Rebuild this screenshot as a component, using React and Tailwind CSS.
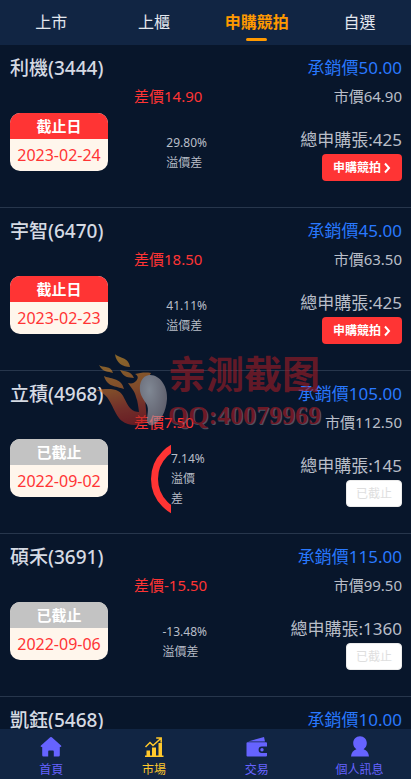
import React, { useState } from 'react';

const tabs = ['上市', '上櫃', '申購競拍', '自選'];

const stocks = [
  { name: '利機', code: '3444', offer: '50.00', market: '64.90', diff: '14.90', rate: '29.80%', total: 425, date: '2023-02-24', open: true },
  { name: '宇智', code: '6470', offer: '45.00', market: '63.50', diff: '18.50', rate: '41.11%', total: 425, date: '2023-02-23', open: true },
  { name: '立積', code: '4968', offer: '105.00', market: '112.50', diff: '7.50', rate: '7.14%', total: 145, date: '2022-09-02', open: false, gauge: true },
  { name: '碩禾', code: '3691', offer: '115.00', market: '99.50', diff: '-15.50', rate: '-13.48%', total: 1360, date: '2022-09-06', open: false },
];

// quoted, but no auction details yet
const upcoming = { name: '凱鈺', code: '5468', offer: '10.00' };

const HomeIcon = () => (
  <svg viewBox="0 0 22 22" className="size-[22px]" fill="currentColor" aria-hidden="true">
    <path d="M10.200 1.300a1.200 1.200 0 0 1 1.600 0l9.200 8.200c.7.7.3 1.500-.6 1.500h-.6v8.200a1.300 1.300 0 0 1-1.300 1.300h-4.700v-4.800c0-.7-.4-1.100-1.100-1.100h-3.400c-.7 0-1.100.4-1.100 1.100v4.800H3.500a1.300 1.300 0 0 1-1.300-1.300V11h-.6c-.9 0-1.300-.8-.6-1.500z" />
  </svg>
);

const MarketIcon = () => (
  <svg viewBox="0 0 22 22" className="size-[22px]" fill="currentColor" aria-hidden="true">
    <path d="M3.500 14.500H7V20H3.500zM9 11.500h4V20H9zM15.500 7H19v13h-3.500zM2 19.500h18.500V21H2z" />
    <path d="M2.500 11 7 6.500l3 3 7.500-6.700M13.200 2h5v4.800" fill="none" stroke="currentColor" strokeWidth="1.500" />
  </svg>
);

const WalletIcon = () => (
  <svg viewBox="0 0 22 22" className="size-[22px]" fill="currentColor" aria-hidden="true">
    <path d="M2 5.400 18 1l1 4.400z" />
    <path d="M2 6.200h18a1 1 0 0 1 1 1v3.300h-5.200a3.200 3.200 0 0 0 0 6.400H21v2.600a1 1 0 0 1-1 1H1.500a1 1 0 0 1-1-1V7.200a1 1 0 0 1 1-1z" />
    <circle cx="16" cy="13.700" r="1.700" />
  </svg>
);

const UserIcon = () => (
  <svg viewBox="0 0 22 22" className="size-[22px]" fill="currentColor" aria-hidden="true">
    <path d="M11 .2c4 0 6.800 2.900 6.800 6.900 0 2.700-1.300 4.900-3.200 6.200 3 1 5.200 3.500 5.400 7.200H2c.2-3.700 2.400-6.200 5.400-7.200-1.900-1.300-3.200-3.500-3.200-6.200C4.200 3.100 7 .2 11 .2z" />
  </svg>
);

const navItems = [
  { label: '首頁', Icon: HomeIcon },
  { label: '市場', Icon: MarketIcon },
  { label: '交易', Icon: WalletIcon },
  { label: '個人訊息', Icon: UserIcon },
];

const DeadlineBadge = ({ open, date }) => (
  <div className="w-[98px] overflow-hidden rounded-[10px] bg-[#fff6ec] text-center">
    <p className={`h-[26px] text-[15px] leading-[26px] font-bold text-white ${open ? 'bg-[#ff3434]' : 'bg-[#c3c3c3]'}`}>
      {open ? '截止日' : '已截止'}
    </p>
    <p className="h-8 text-base leading-8 text-[#ff3434]">{date}</p>
  </div>
);

const RowTitle = ({ stock }) => (
  <div className="flex items-center justify-between">
    <h2 className="text-[19px] leading-8 font-medium text-[#d5dae3]">
      {stock.name}({stock.code})
    </h2>
    <p className="text-[17px] leading-8 text-[#2979ff]">承銷價{stock.offer}</p>
  </div>
);

const StockRow = ({ stock }) => (
  <li className="h-[163px] shrink-0 border-b border-[#27364c] pt-[7px] pr-[9px] pl-[10px]">
    <RowTitle stock={stock} />
    <div className="flex">
      <div className="w-[124px] pt-[29px]">
        <DeadlineBadge open={stock.open} date={stock.date} />
      </div>
      <div className="whitespace-nowrap">
        <p className="text-[15px] leading-6 text-[#ff3434]">差價{stock.diff}</p>
        <div className="mt-2 ml-[17px] flex h-[74px] w-14 items-center justify-end text-xs leading-5 text-[#b9bec8]">
          {stock.gauge && (
            <svg viewBox="0 0 20 70" className="h-[70px] w-5 shrink-0" aria-hidden="true">
              <circle cx="39" cy="35" r="35.500" fill="none" stroke="#ff3434" strokeWidth="7" />
            </svg>
          )}
          <div className={stock.gauge ? 'w-9' : ''}>
            <p>{stock.rate}</p>
            <p className={stock.gauge ? 'w-6 whitespace-normal' : ''}>溢價差</p>
          </div>
        </div>
      </div>
      <div className="flex flex-1 flex-col items-end text-[#b9bec8]">
        <p className="text-[15px] leading-6">市價{stock.market}</p>
        <p className="mt-[18px] text-[17px] leading-7">總申購張:{stock.total}</p>
        {stock.open ? (
          <button className="flex h-[27px] w-20 items-center justify-center gap-[2px] rounded-[4px] bg-[#ff3434] text-xs font-bold text-white">
            申購競拍
            <svg viewBox="0 0 8 12" className="h-3 w-2" fill="none" stroke="currentColor" strokeWidth="2" aria-hidden="true">
              <path d="M2 1.500 6 6l-4 4.500" />
            </svg>
          </button>
        ) : (
          <button disabled className="h-[27px] w-14 rounded-[4px] border border-[#ebebeb] bg-white text-xs text-[#dedede]">
            已截止
          </button>
        )}
      </div>
    </div>
  </li>
);

const Watermark = () => (
  <div className="pointer-events-none absolute top-[352px] left-[96px] flex opacity-60" aria-hidden="true">
    <svg viewBox="0 0 72 76" className="h-[76px] w-[72px] shrink-0">
      <defs>
        <linearGradient id="flame" gradientUnits="userSpaceOnUse" x1="20" y1="0" x2="34" y2="74">
          <stop offset="0" stopColor="#e0a02c" />
          <stop offset="0.5" stopColor="#d0702a" />
          <stop offset="0.75" stopColor="#b8402a" />
          <stop offset="1" stopColor="#a82020" />
        </linearGradient>
        <radialGradient id="pearl" cx="0.35" cy="0.3" r="0.8">
          <stop offset="0" stopColor="#d0d4da" />
          <stop offset="1" stopColor="#92878f" />
        </radialGradient>
      </defs>
      <path d="M19 2c3 4 14 3 15 13-7 0-14-4-15-13z" fill="url(#flame)" />
      <path d="M3 13c4 3 12 0 14 8-5-2-10 0-14-8z" fill="url(#flame)" />
      <path d="M24 18c4 2 11 0 14 8-6-1-10 0-14-8z" fill="url(#flame)" />
      <path d="M8 24c5 3 17 1 20 13-8-3-17-2-20-13z" fill="url(#flame)" />
      <path d="M0 38c8-1 17-2 22 1 6 3 7 11 12 17 3 3 6 4 9 4-1-6-1-10-3-15-1-5-3-7-8-14 4 1 6 0 8-2 2-2 3-5-1-7 5-1 10-2 16-1l-7 12 3 37c-5 3-18 5-25-1C16 61 16 42 0 38z" fill="url(#flame)" />
      <path d="M53 23c11-1 19 12 18 24-1 13-6 22-14 26-4 1-6-1-6-5 0-5 2-10 0-15-2-4-6-8-7-14-1-8 2-15 9-16z" fill="url(#pearl)" />
    </svg>
    <div className="whitespace-nowrap">
      <p className="font-['Noto_Sans_CJK_SC',sans-serif] text-[38px] leading-10 font-bold text-[#a01c26]">亲测截图</p>
      <p className="mt-3 font-['Liberation_Serif',serif] text-[26px] leading-6 font-bold text-[#b01c24] text-shadow-[1px_1px_0_#7a7a84]">
        QQ:40079969
      </p>
    </div>
  </div>
);

const App = () => {
  const [activeTab, setActiveTab] = useState(2);
  const [activeNav, setActiveNav] = useState(1);

  return (
    <div className="relative flex h-screen flex-col overflow-hidden bg-[#08162b] font-['Noto_Sans','Noto_Sans_CJK_TC',sans-serif]">
      <nav className="grid h-[45px] shrink-0 grid-cols-4 bg-[#112543]">
        {tabs.map((tab, index) => (
          <button
            key={tab}
            onClick={() => setActiveTab(index)}
            className={`flex flex-col items-center pt-[10px] text-base leading-6 ${
              index === activeTab ? 'font-bold text-[#ff9900]' : 'text-[#e3e7ee]'
            }`}
          >
            {tab}
            {index === activeTab && <span className="mt-1 h-[3px] w-[21px] rounded-full bg-[#ff9900]" />}
          </button>
        ))}
      </nav>

      <ul className="flex min-h-0 flex-1 flex-col overflow-y-auto [scrollbar-width:none]">
        {stocks.map((stock) => (
          <StockRow key={stock.code} stock={stock} />
        ))}
        <li className="pt-[7px] pr-[9px] pl-[10px]">
          <RowTitle stock={upcoming} />
        </li>
      </ul>

      <nav className="grid h-[50px] shrink-0 grid-cols-4 bg-[#112543]">
        {navItems.map(({ label, Icon }, index) => (
          <button
            key={label}
            onClick={() => setActiveNav(index)}
            className={`flex flex-col items-center pt-[7px] text-xs leading-6 ${
              index === activeNav ? 'text-[#ffc82c]' : 'text-[#6663ff]'
            }`}
          >
            <Icon />
            {label}
          </button>
        ))}
      </nav>

      <Watermark />
    </div>
  );
};

export default App;
